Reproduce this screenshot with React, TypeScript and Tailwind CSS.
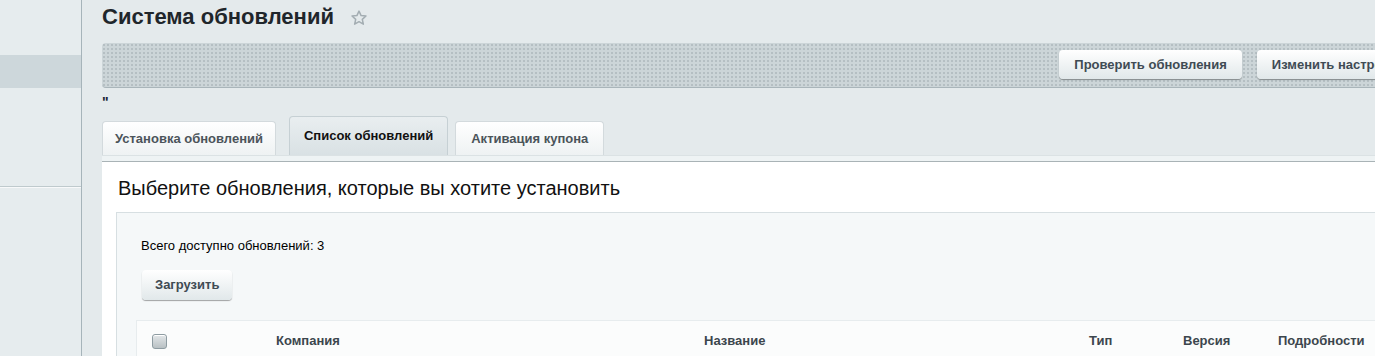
import React from 'react';

const StarIcon = () => (
  <svg width="18" height="18" viewBox="0 0 24 24" fill="none" stroke="#a3adb2" strokeWidth="2" strokeLinejoin="round">
    <path d="M12 2.8l2.8 6 6.5.6-4.9 4.4 1.4 6.4L12 16.9l-5.8 3.3 1.4-6.4-4.9-4.4 6.5-.6z" />
  </svg>
);

const ToolbarButton = ({ children, className = '' }: { children: React.ReactNode; className?: string }) => (
  <button
    className={`shrink-0 h-[29px] px-[15px] rounded-[4px] bg-gradient-to-b from-white to-[#e1e8ea] text-[13px] font-bold text-[#3f4b54] shadow-[0_1px_1px_rgba(0,0,0,0.35)] whitespace-nowrap ${className}`}
  >
    {children}
  </button>
);

export default function App() {
  return (
    <div className="flex w-[1375px] h-[356px] overflow-hidden bg-[#e4eaec] font-['Liberation_Sans',Arial,sans-serif]">
      {/* sidebar */}
      <div className="w-[82px] shrink-0 border-r border-[#a6b4ba] bg-[#e6ecee] flex flex-col">
        <div className="h-[55px] shrink-0" />
        <div className="h-[33px] shrink-0 bg-[#cdd7db]" />
        <div className="h-[98px] shrink-0" />
        <div className="h-[2px] shrink-0 border-t border-[#bfcacd] bg-white/70" />
      </div>

      {/* main */}
      <div className="flex-1 min-w-0 pl-[20px] flex flex-col">
        <div className="shrink-0 flex items-center h-[34px]">
          <h1 className="text-[22px] leading-[30px] font-bold text-[#1f262b]">Система обновлений</h1>
          <span className="ml-[16px] mt-[2px]"><StarIcon /></span>
        </div>

        <div className="shrink-0 mt-[9px] h-[45px] rounded-l-[4px] bg-[#ccd5d8] bg-[radial-gradient(#b5bfc3_0.8px,transparent_0.8px)] bg-[length:4px_4px] border-b border-[#a9b5ba] flex items-center justify-end gap-[15px] pb-[1px] overflow-hidden">
          <ToolbarButton>Проверить обновления</ToolbarButton>
          <ToolbarButton className="-mr-[45px]">Изменить настройки</ToolbarButton>
        </div>

        <div className="shrink-0 h-[28px] text-[14px] leading-[28px] font-bold text-[#1a2433]">"</div>

        {/* tabs */}
        <div className="shrink-0 flex items-end h-[39px]">
          <div className="h-[34px] px-[12px] flex items-center rounded-t-[4px] border border-b-0 border-[#d3dadd] bg-gradient-to-b from-white to-[#eef2f3] text-[13px] font-bold text-[#4b545a]">
            Установка обновлений
          </div>
          <div className="ml-[13px] h-[39px] px-[14px] flex items-center pb-[1px] rounded-t-[4px] border border-b-0 border-[#c6d0d4] bg-gradient-to-b from-[#e9eef0] to-[#d9e1e4] text-[13px] font-bold text-[#111]">
            Список обновлений
          </div>
          <div className="ml-[7px] h-[34px] px-[15px] flex items-center rounded-t-[4px] border border-b-0 border-[#d3dadd] bg-gradient-to-b from-white to-[#eef2f3] text-[13px] font-bold text-[#4b545a]">
            Активация купона
          </div>
        </div>
        <div className="shrink-0 h-[7px] bg-[#eef3f4] border-t border-[#dbe2e4] border-b border-b-[#a9b3b6]" />

        {/* content */}
        <div className="bg-white flex-1 flex flex-col">
          <div className="shrink-0 pl-[16px] pt-[14px] h-[50px] text-[20px] leading-[24px] text-[#111]">
            Выберите обновления, которые вы хотите установить
          </div>
          <div className="ml-[14px] flex-1 bg-[#f5f8f9] border-t border-l border-[#d7dfe2] flex flex-col">
            <div className="shrink-0 pl-[24px] pt-[25px] text-[13px] leading-[16px] text-black">Всего доступно обновлений: 3</div>
            <div className="shrink-0 pl-[25px] mt-[16px]">
              <button className="h-[30px] px-[13px] rounded-[4px] bg-gradient-to-b from-white to-[#e1e8ea] text-[13px] font-bold text-[#3f4b54] shadow-[0_1px_1px_rgba(0,0,0,0.35)]">
                Загрузить
              </button>
            </div>
            <div className="shrink-0 ml-[19px] mt-[20px] h-[60px] bg-[#fbfcfc] border-t border-l border-[#e7ecee] flex items-start">
              <div className="flex items-center h-[40px] w-full text-[13px] font-bold text-[#3c464d]">
                <div className="w-[139px] pl-[15px] flex items-center">
                  <span className="w-[15px] h-[15px] rounded-[3px] border border-[#8e9ca2] bg-gradient-to-b from-[#e3e7e9] to-[#b9c1c4] shadow-[inset_0_1px_0_#fff]" />
                </div>
                <div className="w-[428px]">Компания</div>
                <div className="w-[385px]">Название</div>
                <div className="w-[94px]">Тип</div>
                <div className="w-[95px]">Версия</div>
                <div className="flex-1">Подробности</div>
              </div>
            </div>
          </div>
        </div>
      </div>
    </div>
  );
}
